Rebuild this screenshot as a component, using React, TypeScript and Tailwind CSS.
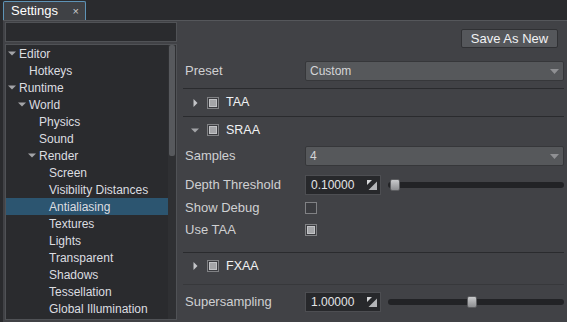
import React from "react";

type TreeItem = { label: string; depth: number; open?: boolean; selected?: boolean };

const tree: TreeItem[] = [
  { label: "Editor", depth: 0, open: true },
  { label: "Hotkeys", depth: 1 },
  { label: "Runtime", depth: 0, open: true },
  { label: "World", depth: 1, open: true },
  { label: "Physics", depth: 2 },
  { label: "Sound", depth: 2 },
  { label: "Render", depth: 2, open: true },
  { label: "Screen", depth: 3 },
  { label: "Visibility Distances", depth: 3 },
  { label: "Antialiasing", depth: 3, selected: true },
  { label: "Textures", depth: 3 },
  { label: "Lights", depth: 3 },
  { label: "Transparent", depth: 3 },
  { label: "Shadows", depth: 3 },
  { label: "Tessellation", depth: 3 },
  { label: "Global Illumination", depth: 3 },
];

const pad = ["pl-[2px]", "pl-[12px]", "pl-[22px]", "pl-[32px]"];

function ArrowDown() {
  return (
    <svg width="8" height="5" viewBox="0 0 8 5" className="shrink-0">
      <path d="M0 0.5 L8 0.5 L4 4.5 Z" fill="#a3a4a7" />
    </svg>
  );
}

function ArrowRight() {
  return (
    <svg width="5" height="8" viewBox="0 0 5 8" className="shrink-0">
      <path d="M0.5 0 L4.5 4 L0.5 8 Z" fill="#c4c5c8" />
    </svg>
  );
}

function Checkbox({ checked }: { checked?: boolean }) {
  return (
    <div className="w-[12px] h-[12px] border border-[#808184] bg-[#3b3c40] flex items-center justify-center shrink-0">
      {checked && <div className="w-[8px] h-[8px] bg-[#a4a5a8] border border-[#c2c3c6]" />}
    </div>
  );
}

function Dropdown({ value }: { value: string }) {
  return (
    <div className="flex-1 h-[20px] bg-[#56585b] border border-[#36373a] rounded-[2px] flex items-center justify-between pl-[4px] pr-[4px] text-[#d4d5d7]">
      <span>{value}</span>
      <svg width="9" height="5" viewBox="0 0 9 5">
        <path d="M0 0 L9 0 L4.5 5 Z" fill="#8f9093" />
      </svg>
    </div>
  );
}

function DragIcon() {
  return (
    <svg width="10" height="10" viewBox="0 0 10 10">
      <path d="M10 1.5 L10 10 L1.5 10 Z" fill="#b4b5b8" />
      <path d="M0 0 L5 0 L0 5 Z" fill="#d6d7d9" />
    </svg>
  );
}

function NumberSlider({ value, pos }: { value: string; pos: number }) {
  return (
    <div className="flex items-center flex-1">
      <div className="w-[76px] h-[20px] bg-[#27282b] border border-[#4d4e52] flex items-center justify-between pl-[5px] pr-[3px] text-[#e4e5e7] text-[12px]">
        <span>{value}</span>
        <DragIcon />
      </div>
      <div className="flex-1 ml-[7px] relative h-[12px] flex items-center">
        <div className="w-full h-[6px] rounded-full bg-[#222326]" />
        <div
          className="absolute top-0 w-[10px] h-[12px] rounded-[2px] bg-gradient-to-b from-[#c9cacc] to-[#8d8e91] border border-[#5c5d60]"
          style={{ left: pos }}
        />
      </div>
    </div>
  );
}

function SectionHead({ title, open }: { title: string; open?: boolean }) {
  return (
    <>
      <div className="w-[12px] flex justify-center">{open ? <ArrowDown /> : <ArrowRight />}</div>
      <div className="ml-[6px]">
        <Checkbox checked />
      </div>
      <span className="ml-[7px]">{title}</span>
    </>
  );
}

function Row({ label, children, h = "h-[20px]" }: { label: string; children: React.ReactNode; h?: string }) {
  return (
    <div className={`flex items-center ${h}`}>
      <span className="w-[122px] pl-[2px] text-[#cfd0d2] text-[13px]">{label}</span>
      {children}
    </div>
  );
}

export default function App() {
  return (
    <div
      className="w-[567px] h-[322px] bg-[#2a2b2e] flex flex-col overflow-hidden text-[12px]"
      style={{ fontFamily: '"Liberation Sans", Arial, sans-serif' }}
    >
      <div className="h-[20px] flex items-end pl-[3px] shrink-0">
        <div className="w-[83px] h-[19px] bg-[#3f4145] border-t border-x border-[#5e93b6] rounded-t-[2px] flex items-center justify-between pl-[7px] pr-[6px] text-white text-[13px]">
          <span>Settings</span>
          <span className="text-[#c9cacc] text-[11px] leading-none">×</span>
        </div>
      </div>
      <div className="flex-1 flex ml-[3px] bg-[#414246] border-t border-[#55575b]">
        <div className="w-[174px] flex flex-col pl-[2px] pt-[1px] pb-[2px]">
          <div className="h-[20px] bg-[#2a2b2e] border border-[#505256]" />
          <div className="flex-1 mt-[2px] bg-[#2a2b2e] border border-[#505256] flex">
            <div className="flex-1 flex flex-col">
              {tree.map((t) => (
                <div
                  key={t.label}
                  className={`h-[17px] flex items-center ${pad[t.depth]} ${t.selected ? "bg-[#2c5570]" : ""} text-[#dcdde0]`}
                >
                  <div className="w-[11px] shrink-0">{t.open && <ArrowDown />}</div>
                  <span className="whitespace-nowrap">{t.label}</span>
                </div>
              ))}
            </div>
            <div className="w-[8px] bg-[#2f3033] flex flex-col">
              <div className="h-[111px] mx-[1px] rounded-[2px] bg-[#57595d]" />
            </div>
          </div>
        </div>
        <div className="flex-1 flex flex-col pl-[6px] pr-[3px]">
          <div className="flex justify-end pt-[8px] pr-[6px]">
            <div className="w-[97px] h-[19px] bg-[#55575b] border border-[#303134] rounded-[2px] flex items-center justify-center text-[#f1f2f4] text-[13px]">
              Save As New
            </div>
          </div>
          <div className="mt-[13px]">
            <Row label="Preset">
              <Dropdown value="Custom" />
            </Row>
          </div>
          <div className="mt-[7px] text-[#f1f2f4] text-[12.5px]">
            <div className="h-[28px] flex items-center border-t border-[#2a2b2e] pl-[6px]">
              <SectionHead title="TAA" />
            </div>
            <div className="h-[30px] flex items-center border-t border-[#2a2b2e] pl-[6px] pb-[3px]">
              <SectionHead title="SRAA" open />
            </div>
          </div>
          <div className="flex flex-col">
            <Row label="Samples">
              <Dropdown value="4" />
            </Row>
            <div className="mt-[9px]">
              <Row label="Depth Threshold">
                <NumberSlider value="0.10000" pos={2} />
              </Row>
            </div>
            <Row label="Show Debug" h="h-[25px]">
              <Checkbox />
            </Row>
            <Row label="Use TAA" h="h-[19px]">
              <Checkbox checked />
            </Row>
          </div>
          <div className="mt-[13px] h-[32px] border-t border-[#2a2b2e] pl-[6px] flex items-center text-[#f1f2f4] text-[12.5px] pb-[5px]">
            <SectionHead title="FXAA" />
          </div>
          <div className="border-t border-[#37383b] pt-[7px]">
            <Row label="Supersampling">
              <NumberSlider value="1.00000" pos={79} />
            </Row>
          </div>
        </div>
      </div>
    </div>
  );
}
